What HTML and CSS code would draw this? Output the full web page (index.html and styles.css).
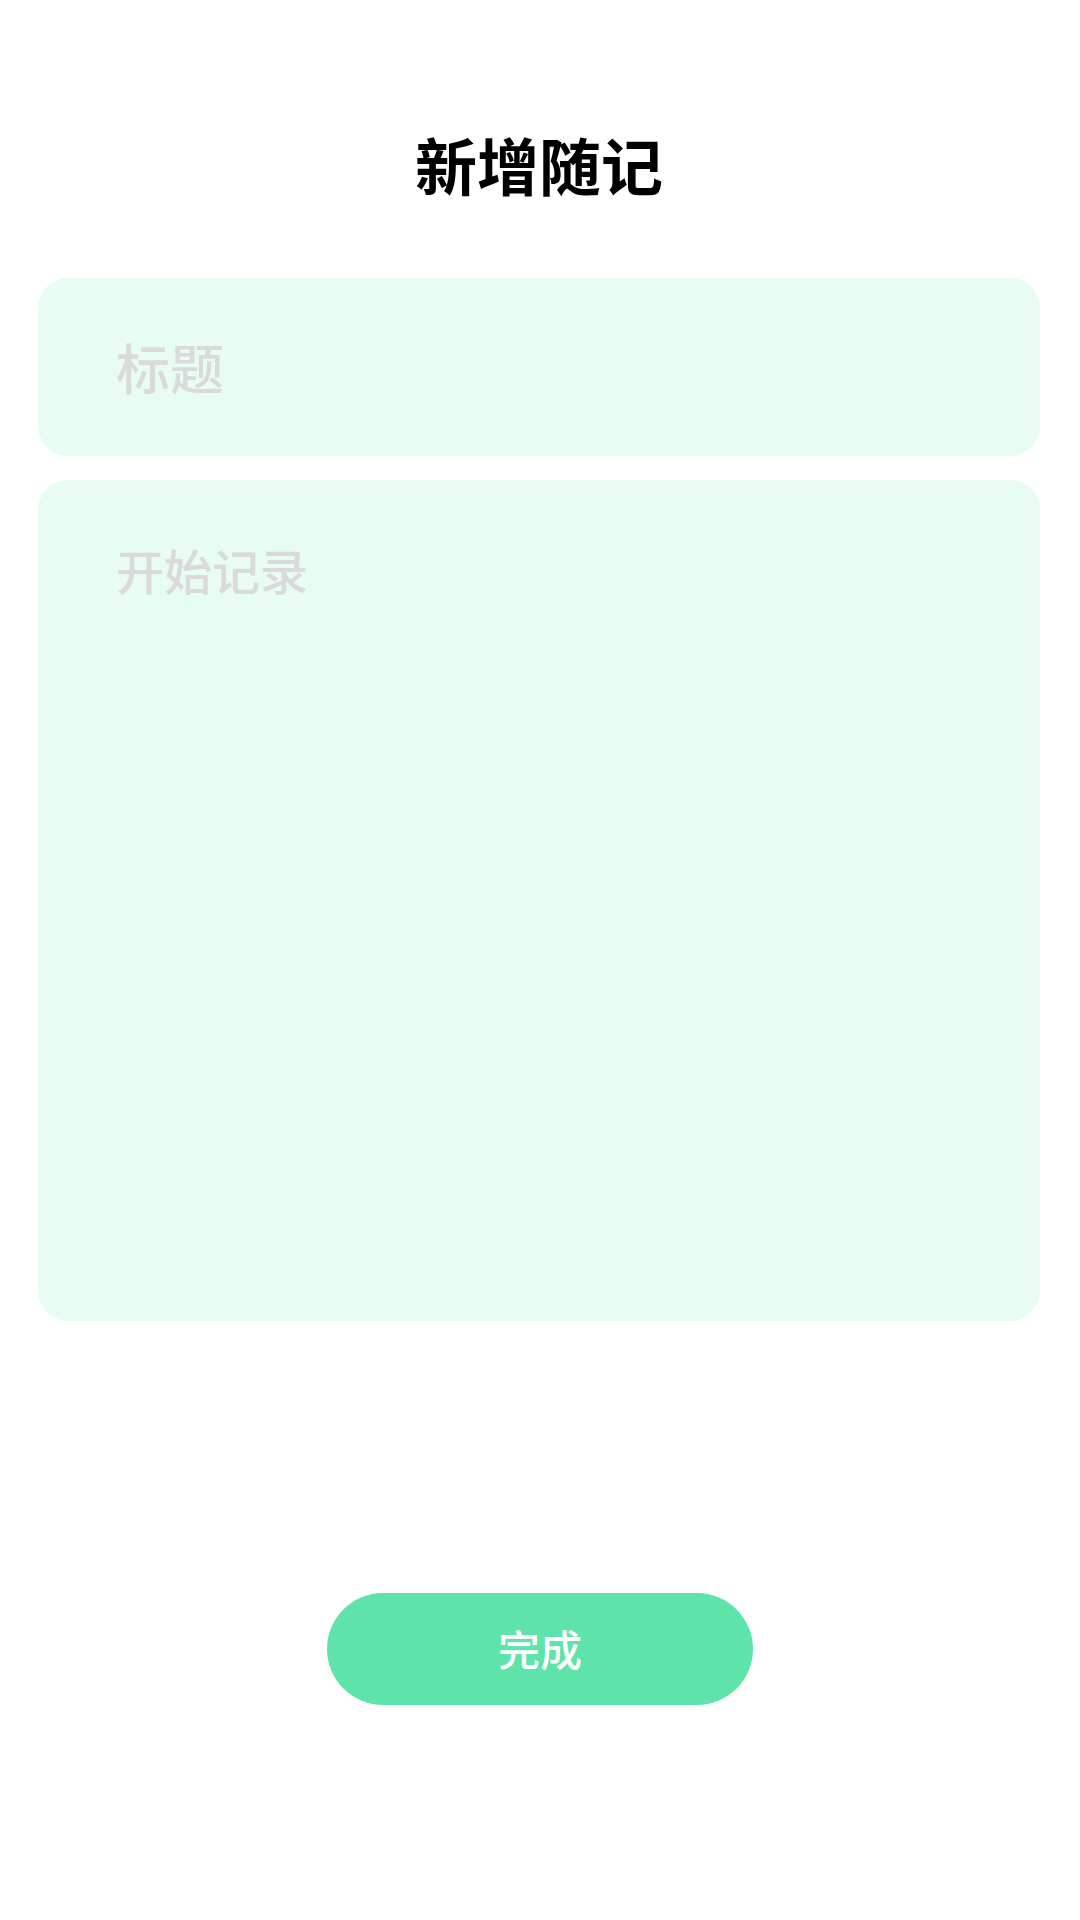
FILE: index.html
```html
<!DOCTYPE html>
<html lang="zh-CN">
<head>
<meta charset="utf-8">
<title>新增随记</title>
<link rel="stylesheet" href="styles.css">
</head>
<body>
<main class="page">
  <h1 class="page-title">新增随记</h1>
  <form class="note-form">
    <div class="field field-title">
      <input class="title-input" type="text" placeholder="标题">
    </div>
    <div class="field field-body">
      <textarea class="body-input" placeholder="开始记录"></textarea>
    </div>
    <div class="actions">
      <button class="done-btn" type="button">完成</button>
    </div>
  </form>
</main>
</body>
</html>
```
FILE: styles.css
```css
* { box-sizing: border-box; }
html, body {
  margin: 0;
  padding: 0;
  background: #ffffff;
}
body {
  width: 1080px;
  height: 1920px;
  font-family: "Noto Sans CJK SC", "Noto Sans", sans-serif;
}
.page {
  display: flex;
  flex-direction: column;
  padding: 0 40px 0 38px;
}
.page-title {
  margin: 124px 0 0;
  text-align: center;
  font-size: 62px;
  line-height: 80px;
  font-weight: 700;
  color: #000000;
}
.note-form {
  display: flex;
  flex-direction: column;
  margin-top: 74px;
}
.field {
  background: #e8fdf2;
  border-radius: 30px;
}
.field-title {
  height: 178px;
  display: flex;
  align-items: center;
  padding: 0 40px 0 78px;
}
.field-body {
  margin-top: 24px;
  height: 841px;
  padding: 55px 40px 40px 78px;
}
.title-input,
.body-input {
  border: none;
  outline: none;
  background: transparent;
  width: 100%;
  padding: 0;
  margin: 0;
  font-family: "Noto Sans CJK SC", "Noto Sans", sans-serif;
  font-weight: 500;
  color: #333333;
}
.title-input {
  font-size: 54px;
  line-height: 76px;
  height: 76px;
}
.body-input {
  font-size: 48px;
  line-height: 68px;
  height: 100%;
  resize: none;
}
.title-input::placeholder,
.body-input::placeholder {
  color: #dadada;
  opacity: 1;
}
.actions {
  display: flex;
  justify-content: center;
  margin-top: 272px;
}
.done-btn {
  width: 426px;
  height: 112px;
  border: none;
  border-radius: 56px;
  background: #5ee4aa;
  color: #ffffff;
  font-family: "Noto Sans CJK SC", "Noto Sans", sans-serif;
  font-size: 42px;
  font-weight: 500;
  padding: 0 0 4px;
  margin-left: 2px;
}
```
